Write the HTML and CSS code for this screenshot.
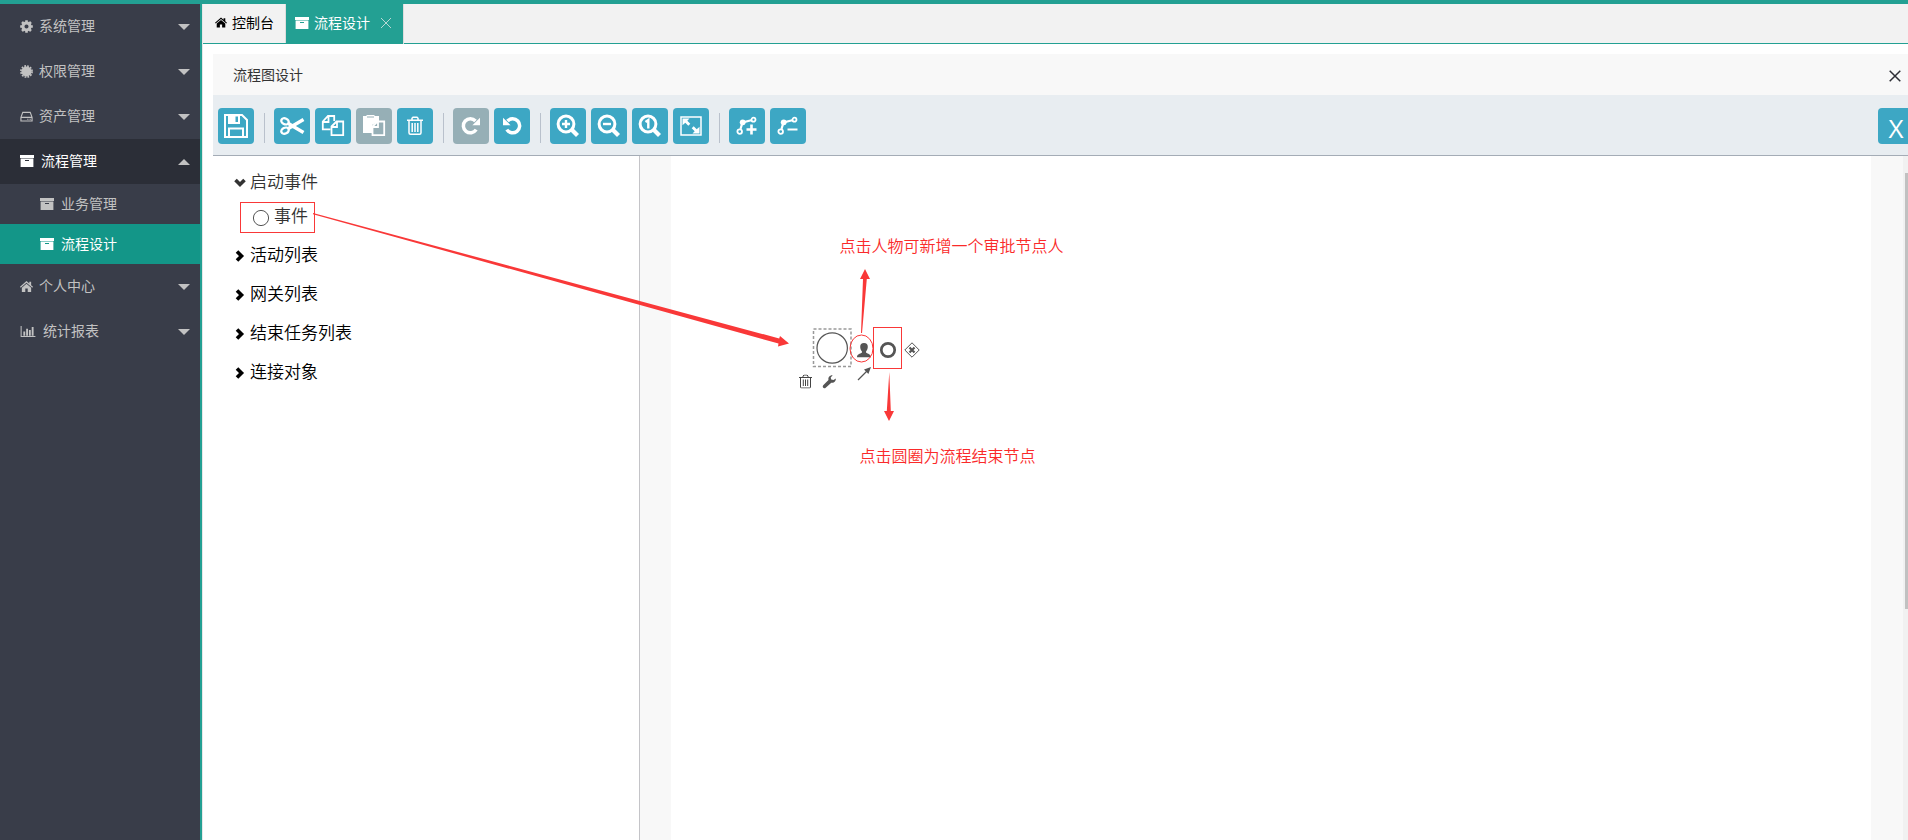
FILE: index.html
```
<!DOCTYPE html>
<html lang="zh-CN">
<head>
<meta charset="utf-8">
<title>流程设计</title>
<link rel="stylesheet" href="styles.css">
</head>
<body>
<svg class="defs" width="0" height="0">
  <symbol id="gear" viewBox="0 0 14 14"><circle cx="7" cy="7" r="3.800" fill="none" stroke="currentColor" stroke-width="3.200"/><path d="M7 .2V3M7 11v2.800M.2 7H3M11 7h2.800M2.200 2.200l1.900 1.900M9.900 9.900l1.900 1.900M2.200 11.800l1.900-1.900M9.900 4.100l1.900-1.900" stroke="currentColor" stroke-width="2.800"/></symbol>
  <symbol id="badge" viewBox="0 0 14 14"><circle cx="7" cy="7" r="5.400" fill="currentColor"/><circle cx="7" cy="7" r="6" fill="none" stroke="currentColor" stroke-width="1.800" stroke-dasharray="1.900 1.240"/></symbol>
  <symbol id="drive" viewBox="0 0 14 14"><path d="M1 8 3 2.600h8L13 8v3.900H1zM1 7.900h12M7.800 9.900h1.300M10.300 9.900h1.300" fill="none" stroke="currentColor" stroke-width="1.200"/></symbol>
  <symbol id="archive" viewBox="0 0 14 14"><path fill="currentColor" fill-rule="evenodd" d="M0 1h14v3H0zM.6 4.400h12.800V13H.6zM5 6v1h4V6z"/></symbol>
  <symbol id="house" viewBox="0 0 14 14"><path fill="currentColor" d="M7 1.200 10 3.800V2h2v3.600l2 1.800-.8.900L7 2.900.8 8.300 0 7.400zM7 4l5 4.300v4.500H8.300V9.200H5.700v3.600H2V8.300z"/></symbol>
  <symbol id="bars" viewBox="0 0 16 14"><path d="M.6 1v11.500H16" fill="none" stroke="currentColor" stroke-width="1.100"/><path fill="currentColor" d="M3 7h2v4.500H3zM6 4h2v7.500H6zM9 5.500h2v6H9zM12 2.200h2v9.300h-2z"/></symbol>
  <symbol id="bin" viewBox="0 0 18 20"><path d="M1 4.300h16M6 4V2.200l1-1h4l1 1V4M3 4.500v12.300q0 1.500 1.500 1.500h9q1.500 0 1.500-1.500V4.500M6.200 7v9M9 7v9M11.800 7v9" fill="none" stroke="currentColor" stroke-width="1.500"/></symbol>
  <symbol id="redo" viewBox="0 0 20 20"><path d="M15.200 13.600A7 7 0 1 1 14.500 5" fill="none" stroke="currentColor" stroke-width="3.500"/><path d="M19 1.700v7.500h-7.600z" fill="currentColor"/></symbol>
  <symbol id="lens" viewBox="0 0 24 24"><circle cx="10" cy="10" r="7.900" fill="none" stroke="currentColor" stroke-width="3"/><path d="m15.500 15.500 6 6" stroke="currentColor" stroke-width="4.300"/></symbol>
  <symbol id="bend" viewBox="0 0 22 20"><g fill="none" stroke="currentColor"><circle cx="3.700" cy="15.600" r="2.300" stroke-width="1.800"/><circle cx="17.500" cy="3.700" r="2" stroke-width="1.800"/><path d="M4.500 13 6.500 6.500 15.300 4.300" stroke-width="2.200"/></g><circle cx="6.700" cy="6.300" r="2.900" fill="currentColor"/></symbol>
  <symbol id="chev" viewBox="0 0 12 12"><path d="m3 1.500 4.500 4.500L3 10.500" fill="none" stroke="currentColor" stroke-width="3.600"/></symbol>
</svg>
<div class="app">
  <nav class="side">
    <div class="item"><svg class="ic"><use href="#gear"/></svg><span>系统管理</span><i class="tri"></i></div>
    <div class="item"><svg class="ic"><use href="#badge"/></svg><span>权限管理</span><i class="tri"></i></div>
    <div class="item"><svg class="ic"><use href="#drive"/></svg><span>资产管理</span><i class="tri"></i></div>
    <div class="item open"><svg class="ic archive"><use href="#archive"/></svg><span>流程管理</span><i class="tri up"></i></div>
    <div class="item sub"><svg class="ic archive"><use href="#archive"/></svg><span>业务管理</span></div>
    <div class="item sub active"><svg class="ic archive"><use href="#archive"/></svg><span>流程设计</span></div>
    <div class="item"><svg class="ic home"><use href="#house"/></svg><span>个人中心</span><i class="tri"></i></div>
    <div class="item"><svg class="ic chart"><use href="#bars"/></svg><span>统计报表</span><i class="tri"></i></div>
  </nav>
  <main class="main">
    <div class="tabs">
      <div class="tab"><svg class="tic"><use href="#house"/></svg><span>控制台</span></div>
      <div class="tab on"><svg class="tic wide"><use href="#archive"/></svg><span>流程设计</span><svg class="x" viewBox="0 0 10 10"><path d="m0 0 10 10M10 0 0 10"/></svg></div>
    </div>
    <section class="panel">
      <header class="title"><span>流程图设计</span><svg class="close" viewBox="0 0 12 12"><path d="m.7.7 10.600 10.600M11.300.7.7 11.300"/></svg></header>
      <div class="tools">
        <button class="btn"><svg width="36" height="36" viewBox="0 0 36 36"><path d="M7 7h17l5 5v17H7z" fill="none" stroke="#fff" stroke-width="2"/><path d="M10 7h12v9H10z" fill="#fff"/><path d="M17.500 8.500h2.500V14h-2.500z" fill="#3da7c4"/><path d="M11 29v-8.500h14V29" fill="none" stroke="#fff" stroke-width="2"/></svg></button>
        <i class="sep"></i>
        <button class="btn"><svg width="36" height="36" viewBox="0 0 36 36" fill="none" stroke="#fff"><ellipse cx="11" cy="13.300" rx="3.900" ry="2.900" transform="rotate(25 11 13.300)" stroke-width="2.300"/><ellipse cx="11" cy="22.700" rx="3.900" ry="2.900" transform="rotate(-25 11 22.700)" stroke-width="2.300"/><path d="m14 15.300 4.500 2.700 11-6.500M14 20.700l4.500-2.700 11 6.500" stroke-width="3.500"/></svg></button>
        <button class="btn"><svg width="36" height="36" viewBox="0 0 36 36" fill="none" stroke="#fff" stroke-width="1.800"><path d="M15.500 21.300H7.800V13.500L13 8h6.200v5M8 14h5.500V8.500"/><path d="m16.500 18.500 5-5h6.700v13.700H16.500zM17 19h5v-5"/></svg></button>
        <button class="btn off"><svg width="36" height="36" viewBox="0 0 36 36"><path d="M7 8h3l1-1h7l1 1h4v5l-7 4v8H7z" fill="#fff"/><path d="M11 9h7" stroke="#96afb6"/><path d="m16.500 18.500 5-5h6.700v13.700H16.500zM17 19h5v-5" fill="#96afb6" stroke="#fff" stroke-width="1.800"/></svg></button>
        <button class="btn"><svg width="18" height="20"><use href="#bin"/></svg></button>
        <i class="sep"></i>
        <button class="btn off"><svg width="20" height="20"><use href="#redo"/></svg></button>
        <button class="btn"><svg class="flip" width="20" height="20"><use href="#redo"/></svg></button>
        <i class="sep"></i>
        <button class="btn"><svg width="24" height="24"><use href="#lens"/><path class="mark" d="M6 10h8M10 6v8"/></svg></button>
        <button class="btn"><svg width="24" height="24"><use href="#lens"/><path class="mark" d="M6 10h8"/></svg></button>
        <button class="btn"><svg width="24" height="24"><use href="#lens"/><path class="mark" d="m7.500 8 2.800-2v8.500"/></svg></button>
        <button class="btn"><svg width="22" height="20" viewBox="0 0 22 20"><path d="M1 1h20v18H1z" fill="none" stroke="#fff" stroke-width="1.500"/><path d="M2.500 2.500h7L7.300 4.700l3 3-2 2-3-3-2.800 2.500zM19.500 17.500h-7l2.200-2.200-3-3 2-2 3 3 2.800-2.500z" fill="#fff"/></svg></button>
        <i class="sep"></i>
        <button class="btn"><svg width="22" height="20"><use href="#bend"/><path class="plus" d="M10.500 13.500h10M15.500 8.500v10"/></svg></button>
        <button class="btn"><svg width="22" height="20"><use href="#bend"/><path d="M10.500 13.500h10" stroke="#fff" stroke-width="2"/></svg></button>
        <button class="btn last">X</button>
      </div>
      <div class="work">
        <aside class="palette">
          <div class="group expanded"><svg class="chev down"><use href="#chev"/></svg><span>启动事件</span></div>
          <div class="leaf"><svg width="18" height="18"><circle cx="9" cy="9" r="7.600" fill="none" stroke="#555"/></svg><span>事件</span></div>
          <div class="group"><svg class="chev"><use href="#chev"/></svg><span>活动列表</span></div>
          <div class="group"><svg class="chev"><use href="#chev"/></svg><span>网关列表</span></div>
          <div class="group"><svg class="chev"><use href="#chev"/></svg><span>结束任务列表</span></div>
          <div class="group"><svg class="chev"><use href="#chev"/></svg><span>连接对象</span></div>
        </aside>
        <div class="stage"><div class="canvas"></div></div>
        <div class="scroll"><div class="thumb"></div></div>
      </div>
    </section>
  </main>
</div>
<svg class="overlay" viewBox="0 0 1908 840">
  <g fill="none" stroke="#555">
    <rect x="813.500" y="329" width="37.500" height="37.500" stroke="#999" stroke-width="1.500" stroke-dasharray="3 2"/>
    <circle cx="832.200" cy="348" r="15.200" stroke-width="1.200"/>
    <circle cx="888" cy="350" r="6.700" stroke-width="2.700"/>
    <path d="m912 342.800 7.200 7.200-7.200 7.200-7.200-7.200z"/>
    <path d="m909.500 347.500 5 5m0-5-5 5" stroke-width="2.200"/>
    <path d="m858 380 10-10" stroke-width="1.200"/>
  </g>
  <g fill="#555">
    <path d="M864 343c2.600 0 3.900 1.600 3.800 4-.1 2-.8 3.300-1.700 4.200v1.500c1.800 1 4.700 1.200 4.700 4.500H857c0-3.300 3-3.500 4.900-4.500v-1.500c-1-.9-1.600-2.200-1.700-4.200-.1-2.400 1.200-4 3.800-4z"/>
    <path d="m871 367-7 2.600 4.400 4.400z"/>
    <path d="M835.800 378.500c.4 2.500-1.800 4.700-4.500 4.200l-5.600 5c-1.700 1.500-4-.7-2.500-2.400l5.300-5.400c-.7-2.700 1.500-5 4.200-4.700l-2 2.200.5 2.200 2.300.5z"/>
  </g>
  <svg x="798.500" y="374.500" width="14" height="14" viewBox="0 0 14 14" fill="none" stroke="#444"><path d="M.5 3h13M4.500 3V1.500l1-1h3l1 1V3M2 3v9.500q0 1 1 1h8q1 0 1-1V3M4.800 5v6.500M7 5v6.500M9.200 5v6.500"/></svg>
  <g fill="none" stroke="#f93838">
    <rect x="240.500" y="202.500" width="74" height="30"/>
    <rect x="873.500" y="327.500" width="28" height="41"/>
    <ellipse cx="861.500" cy="348.500" rx="11.500" ry="13.500"/>
  </g>
  <g fill="#f93838">
    <path d="m313 213 466.200 125.500.8-2.500 9 7.500-11 3 .5-3L313 214.200z"/>
    <path d="m861 333 2-54h-3l5-10 5 10h-3.200L862 333z"/>
    <path d="m889.300 372-2.500 39H884l5 10 5-10h-3.200z"/>
  </g>
  <text x="839.500" y="252">点击人物可新增一个审批节点人</text>
  <text x="859.500" y="462">点击圆圈为流程结束节点</text>
</svg>
</body>
</html>
```
FILE: styles.css
```
* { box-sizing: border-box; }
body { margin: 0; overflow: hidden; background: #fff; color: #333; font: 14px/20px "Noto Sans CJK SC", sans-serif; }
svg { display: block; flex: none; }
.defs { position: absolute; }
.app { display: flex; height: 840px; border-top: 4px solid #23a093; }
.side { width: 202px; flex: none; background: #393d49; border-right: 2px solid #23a093; color: #c2c2c2; }
.item { display: flex; align-items: center; height: 45px; padding: 0 10px 1px 20px; }
.item span { margin: 0 0 2px 6px; }
.ic { width: 13px; height: 13px; }
.ic.archive { width: 14px; height: 14px; }
.ic.archive + span { margin-left: 7px; }
.ic.chart { width: 16px; }
.ic.chart + span { margin-left: 7px; }
.tri { margin-left: auto; border: 6px solid transparent; border-top-color: #c2c2c2; border-bottom: 0; }
.item .tri { margin-top: 1px; }
.tri.up { border-top: 0; border-bottom: 6px solid #c2c2c2; }
.open { background: #2b2e37; color: #fff; }
.sub { height: 40px; padding-left: 40px; }
.active { background: #139688; color: #fff; }
.main { display: flex; flex: 1; min-width: 0; flex-direction: column; border-left: 1px solid #e5e8e8; }
.tabs { display: flex; flex: none; height: 40px; background: #f2f2f2; border-bottom: 1px solid #23a093; color: #000; }
.tab { display: flex; align-items: center; width: 83px; padding: 0 0 2px 12px; border-right: 1px solid #ddd; }
.tab span { margin: 0 0 1px 5px; }
.tic { width: 12px; height: 13px; }
.tic.wide { width: 14px; height: 14px; }
.tab.on { width: 118px; height: 40px; padding: 0 0 3px 9px; background: #23a093; color: #fff; }
.x { width: 10px; height: 10px; margin-left: 11px; overflow: visible; stroke: #b8d8d4; }
.panel { display: flex; flex: 1; flex-direction: column; margin: 10px 0 0 10px; }
.title { display: flex; align-items: center; justify-content: space-between; flex: none; height: 41px; padding: 0 7px 0 20px; background: #f8f8f8; }
.title span { margin-bottom: 2px; }
.close { width: 12px; height: 12px; margin-top: 3px; stroke: #2d2e35; stroke-width: 1.5; }
.tools { display: flex; flex: none; height: 61px; padding: 13px 0 0 5px; gap: 5px; overflow: hidden; background: #e8edf1; border-bottom: 1px solid #a4acb6; }
.btn { display: flex; flex: none; align-items: center; justify-content: center; width: 36px; height: 36px; padding: 0; border: 0; border-radius: 4px; background: #3da7c4; color: #fff; }
.off { background: #96afb6; }
.flip { transform: scaleX(-1); }
.mark { fill: none; stroke: #fff; stroke-width: 2.4; }
.plus { stroke: #fff; stroke-width: 2.6; }
.sep { flex: none; width: 1px; height: 30px; margin: 5px 4px 0 5px; background: #b9c1cc; }
.last { margin: 0 -6px 0 auto; padding: 3px 0 0; font: 500 26px/30px "Open Sans", sans-serif; }
.work { display: flex; flex: 1; }
.palette { width: 427px; flex: none; padding-top: 7px; border-right: 1px solid #c4c4c8; color: #000; font-size: 17px; font-weight: 350; line-height: 35px; }
.group { display: flex; align-items: center; height: 39px; padding-left: 21px; }
.group span { margin-bottom: 2px; }
.expanded { color: #333; }
.expanded span { margin-bottom: 4px; }
.chev { width: 12px; height: 12px; margin: 2px 4px 0 0; }
.down { margin-top: 0; transform: rotate(90deg); }
.leaf { display: flex; align-items: center; height: 33px; padding: 0 0 3px 39px; color: #333; line-height: 24px; }
.leaf svg { margin-top: 1px; }
.leaf span { margin: 0 0 4px 4px; }
.stage { flex: 1; padding: 0 32px 0 31px; background: #f8f8f8; }
.canvas { height: 100%; background: #fff; }
.scroll { width: 5px; padding: 17px 0 0 2px; background: #f1f1f1; }
.thumb { height: 436px; background: #c1c1c1; }
.overlay { position: absolute; top: 0; left: 0; width: 1908px; height: 840px; pointer-events: none; }
.overlay text { fill: #fa2a2a; font-size: 16px; font-weight: 350; }
```
